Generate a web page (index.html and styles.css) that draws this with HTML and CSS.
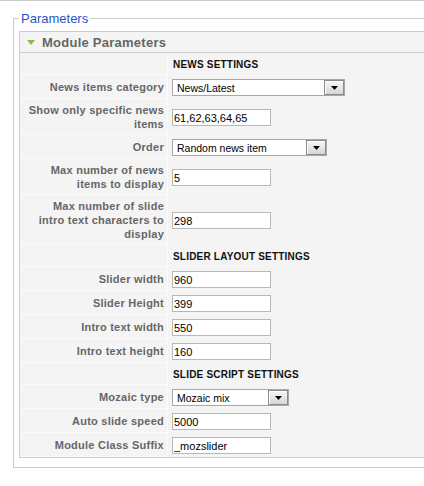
FILE: index.html
```html
<!DOCTYPE html>
<html lang="en">
<head>
<meta charset="utf-8">
<title>Parameters</title>
<link rel="stylesheet" href="styles.css">
</head>
<body>
<div class="page">
  <fieldset class="params">
    <legend class="params-legend">Parameters</legend>
    <div class="panel">
      <h3 class="panel-title">
        <svg class="toggle" width="8" height="5" viewBox="0 0 8 5"><path d="M0 0H8L4 5Z" fill="#84bb4c"/></svg>
        <span>Module Parameters</span>
      </h3>
      <table class="paramlist">
        <tbody>
          <tr>
            <td class="key"></td>
            <td class="value heading">NEWS SETTINGS</td>
          </tr>
          <tr>
            <td class="key">News items category</td>
            <td class="value">
              <span class="select w173"><select><option>News/Latest</option></select><span class="arrow"><svg width="7" height="4" viewBox="0 0 7 4"><path d="M0 0H7L3.5 4Z" fill="#000"/></svg></span></span>
            </td>
          </tr>
          <tr>
            <td class="key">Show only specific news items</td>
            <td class="value"><input class="text" type="text" value="61,62,63,64,65"></td>
          </tr>
          <tr>
            <td class="key">Order</td>
            <td class="value">
              <span class="select w155"><select><option>Random news item</option></select><span class="arrow"><svg width="7" height="4" viewBox="0 0 7 4"><path d="M0 0H7L3.5 4Z" fill="#000"/></svg></span></span>
            </td>
          </tr>
          <tr>
            <td class="key">Max number of news items to display</td>
            <td class="value"><input class="text" type="text" value="5"></td>
          </tr>
          <tr>
            <td class="key">Max number of slide intro text characters to display</td>
            <td class="value"><input class="text" type="text" value="298"></td>
          </tr>
          <tr>
            <td class="key"></td>
            <td class="value heading">SLIDER LAYOUT SETTINGS</td>
          </tr>
          <tr>
            <td class="key">Slider width</td>
            <td class="value"><input class="text" type="text" value="960"></td>
          </tr>
          <tr>
            <td class="key">Slider Height</td>
            <td class="value"><input class="text" type="text" value="399"></td>
          </tr>
          <tr>
            <td class="key">Intro text width</td>
            <td class="value"><input class="text" type="text" value="550"></td>
          </tr>
          <tr>
            <td class="key">Intro text height</td>
            <td class="value"><input class="text" type="text" value="160"></td>
          </tr>
          <tr>
            <td class="key"></td>
            <td class="value heading">SLIDE SCRIPT SETTINGS</td>
          </tr>
          <tr>
            <td class="key">Mozaic type</td>
            <td class="value">
              <span class="select w117"><select><option>Mozaic mix</option></select><span class="arrow"><svg width="7" height="4" viewBox="0 0 7 4"><path d="M0 0H7L3.5 4Z" fill="#000"/></svg></span></span>
            </td>
          </tr>
          <tr>
            <td class="key">Auto slide speed</td>
            <td class="value"><input class="text" type="text" value="5000"></td>
          </tr>
          <tr>
            <td class="key">Module Class Suffix</td>
            <td class="value"><input class="text" type="text" value="_mozslider"></td>
          </tr>
        </tbody>
      </table>
    </div>
  </fieldset>
</div>
</body>
</html>
```
FILE: styles.css
```css
html, body {
  margin: 0;
  padding: 0;
  overflow: hidden;
  background: #fff;
}

body {
  font-family: "Liberation Sans", Arial, sans-serif;
  font-size: 11px;
  color: #333;
}

.page {
  border-top: 1px solid #cccccc;
  padding-top: 10px;
  width: 424px;
  overflow: hidden;
}

.params {
  margin: 0 0 0 13px;
  padding: 5px 9px 9px 5px;
  border: 1px solid #cccccc;
  width: 470px;
  box-sizing: border-box;
  min-width: 0;
}

.params-legend {
  padding: 0 2px;
  font-size: 13px;
  line-height: 15px;
  color: #1f55c8;
}

.panel {
  border: 1px solid #cccccc;
  background: #f4f4f4;
}

.panel-title {
  margin: 0;
  height: 20px;
  display: flex;
  align-items: center;
  gap: 7px;
  padding-left: 7px;
  border-bottom: 1px solid #cccccc;
  font-size: 13px;
  letter-spacing: 0.25px;
  font-weight: bold;
  color: #666666;
}

.toggle {
  display: block;
  margin-top: 1px;
}

.paramlist {
  width: 100%;
  border-spacing: 0;
}

.paramlist td {
  padding: 0;
  vertical-align: middle;
}

.paramlist td.key {
  width: 138px;
  padding: 3.5px 3px 3.5px 6px;
  text-align: right;
  font-weight: bold;
  font-size: 11px;
  line-height: 14px;
  letter-spacing: 0.25px;
  color: #666666;
  border-right: 1px solid #fbfbfb;
  border-bottom: 1px solid #fbfbfb;
}

.paramlist td.value {
  padding: 4px 4px 3px 4px;
}

.paramlist td.heading {
  padding: 5px 4px 3px 5px;
  font-weight: bold;
  font-size: 10px;
  line-height: 14px;
  letter-spacing: 0.2px;
  color: #111111;
}

.text {
  display: block;
  box-sizing: border-box;
  width: 99px;
  height: 17px;
  margin: 0;
  padding: 0 1px;
  border: 1px solid #b8b8b8;
  background: #fff;
  font-family: "Liberation Sans", Arial, sans-serif;
  font-size: 11px;
  color: #000;
  outline: none;
}

.select {
  display: flex;
  box-sizing: border-box;
  height: 17px;
  border: 1px solid #a8a8a8;
  background: #fff;
}

.w173 { width: 173px; }
.w155 { width: 155px; }
.w117 { width: 117px; }

.select select {
  flex: 1;
  min-width: 0;
  -webkit-appearance: none;
  appearance: none;
  border: 0;
  margin: 0;
  padding: 0 0 0 4px;
  height: 15px;
  background: transparent;
  font-family: "Liberation Sans", Arial, sans-serif;
  font-size: 10.5px;
  color: #000;
  outline: none;
}

.arrow {
  box-sizing: border-box;
  width: 20px;
  height: 15px;
  display: flex;
  align-items: center;
  justify-content: center;
  border: 1px solid #8c8c8c;
  background: linear-gradient(#f7f7f7, #d6d6d6);
  box-shadow: inset 1px 1px 0 #ffffff;
}

.arrow svg {
  display: block;
}
```
